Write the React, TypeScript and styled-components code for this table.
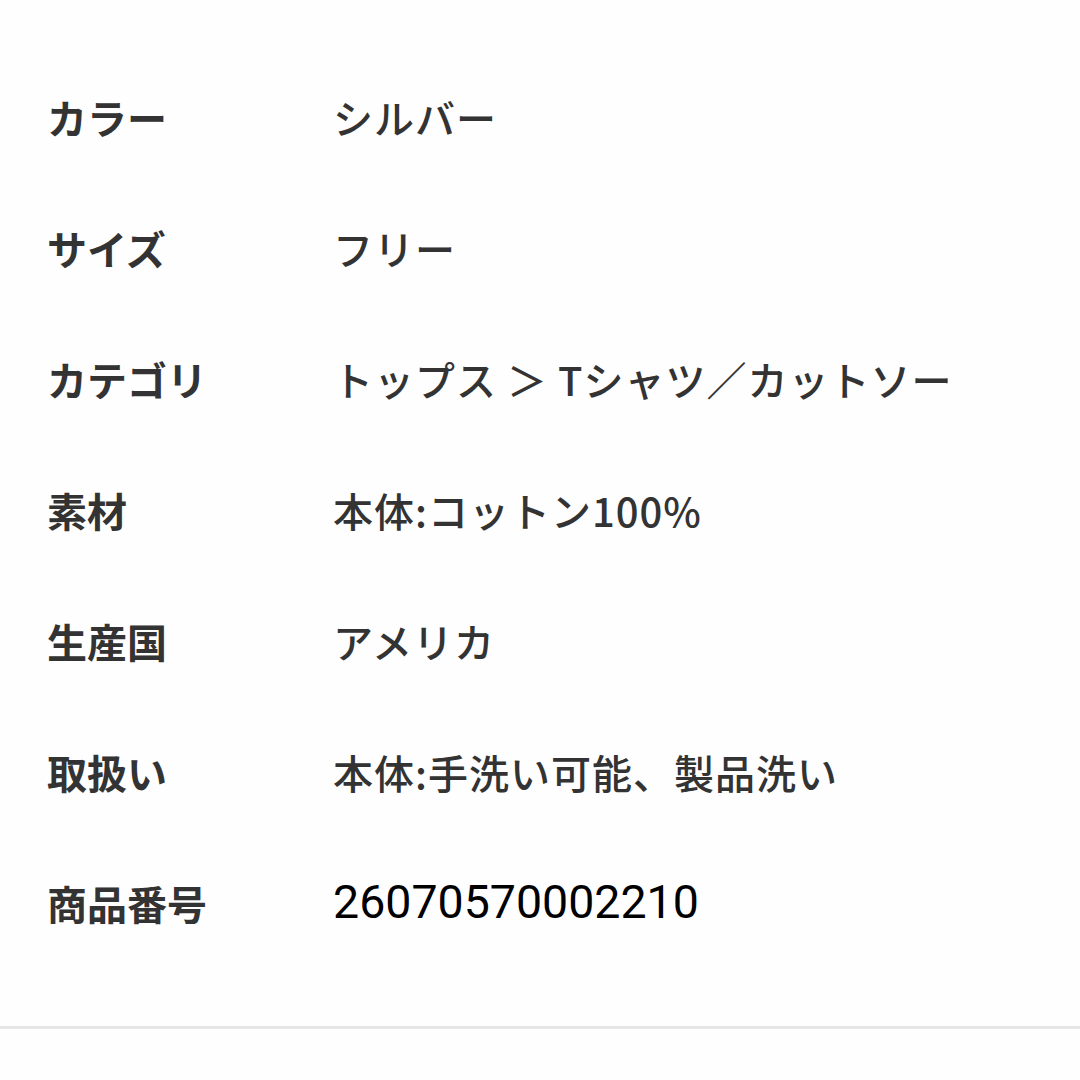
import React from "react";
import styled, { createGlobalStyle } from "styled-components";

const Global = createGlobalStyle`
  html, body { margin: 0; padding: 0; background: #fff; }
  body { font-family: "Noto Sans CJK JP", "Noto Sans", sans-serif; }
`;

const Page = styled.div`
  width: 1080px;
  height: 1080px;
  overflow: hidden;
  background: #fefefe;
  display: flex;
  flex-direction: column;
`;

const List = styled.dl`
  margin: 0;
  padding: 51px 0 58px 47px;
  display: flex;
  flex-direction: column;
`;

const Row = styled.div`
  display: grid;
  grid-template-columns: 286px 1fr;
  align-items: center;
  height: 131px;
`;

const Label = styled.dt`
  font-family: "Noto Sans CJK JP", sans-serif;
  font-weight: 700;
  font-size: 40px;
  color: #333;
  line-height: 1;
`;

const Value = styled.dd<{ $numeric?: boolean }>`
  margin: 0;
  font-family: ${(p) => (p.$numeric ? `Roboto, "Liberation Sans", sans-serif` : `"Noto Sans CJK JP", sans-serif`)};
  font-weight: ${(p) => (p.$numeric ? 400 : 500)};
  font-size: ${(p) => (p.$numeric ? "46.5px" : "40px")};
  letter-spacing: ${(p) => (p.$numeric ? "0" : "1px")};
  color: ${(p) => (p.$numeric ? "#000" : "#333")};
  line-height: 1;
  white-space: nowrap;
`;

const Divider = styled.hr`
  margin: 0;
  border: none;
  height: 3px;
  background: #e6e6e6;
`;

const rows: { label: string; value: string; numeric?: boolean }[] = [
  { label: "カラー", value: "シルバー" },
  { label: "サイズ", value: "フリー" },
  { label: "カテゴリ", value: "トップス ＞ Tシャツ／カットソー" },
  { label: "素材", value: "本体:コットン100%" },
  { label: "生産国", value: "アメリカ" },
  { label: "取扱い", value: "本体:手洗い可能、製品洗い" },
  { label: "商品番号", value: "26070570002210", numeric: true },
];

export default function App() {
  return (
    <>
      <Global />
      <Page>
        <List>
          {rows.map((r) => (
            <Row key={r.label}>
              <Label>{r.label}</Label>
              <Value $numeric={r.numeric}>{r.value}</Value>
            </Row>
          ))}
        </List>
        <Divider />
      </Page>
    </>
  );
}
